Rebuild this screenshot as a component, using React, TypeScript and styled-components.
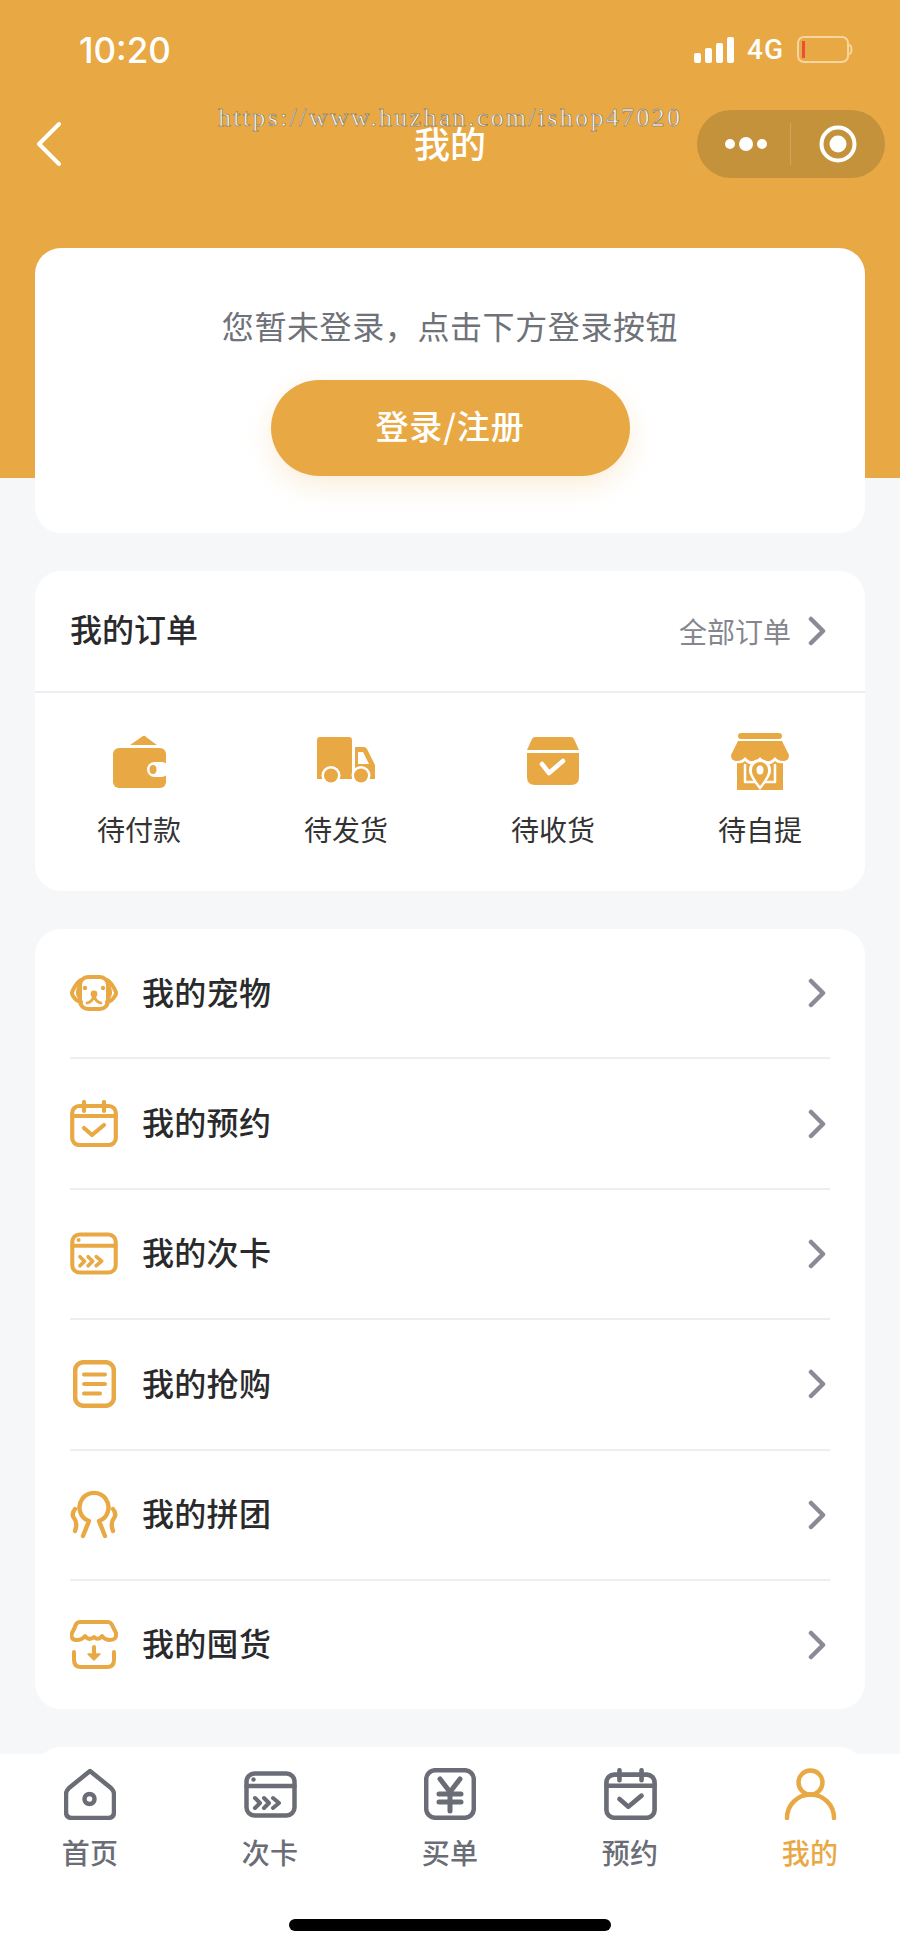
import React from "react";
import styled, { createGlobalStyle } from "styled-components";

const ORANGE = "#e8a945";
const GREY = "#6b6d76";

const Global = createGlobalStyle`
  html, body {
    margin: 0;
    padding: 0;
    background: #f6f7f9;
  }
  * {
    box-sizing: border-box;
  }
`;

const Page = styled.div`
  position: relative;
  width: 900px;
  height: 1948px;
  overflow: hidden;
  display: flex;
  flex-direction: column;
  font-family: "Noto Sans CJK SC", "Noto Sans", sans-serif;
  background: linear-gradient(${ORANGE} 478px, #f6f7f9 478px);
`;

const Watermark = styled.div`
  position: absolute;
  top: 103px;
  left: 218px;
  font-family: "Liberation Serif", serif;
  font-size: 26px;
  line-height: 30px;
  letter-spacing: 2.3px;
  white-space: nowrap;
  color: rgba(255, 255, 255, 0.92);
  -webkit-text-stroke: 0.5px #6a655a;
`;

const StatusBar = styled.div`
  height: 98px;
  padding: 30px 47px 0 79px;
  display: flex;
  justify-content: space-between;
  align-items: flex-start;
  color: #fff;
`;

const Time = styled.div`
  font-family: "Inter", sans-serif;
  font-size: 35px;
  font-weight: 500;
  line-height: 40px;
`;

const StatusIcons = styled.div`
  display: flex;
  align-items: center;
  gap: 13px;
  height: 40px;
`;

const Network = styled.span`
  font-family: "Roboto", sans-serif;
  font-size: 28px;
  font-weight: 500;
  line-height: 30px;
  letter-spacing: 1px;
`;

const NavBar = styled.div`
  height: 92px;
  padding: 0 15px;
  display: grid;
  grid-template-columns: 1fr auto 1fr;
  align-items: center;
  color: #fff;
`;

const BackButton = styled.div`
  padding-left: 22px;
`;

const NavTitle = styled.div`
  font-size: 36px;
  font-weight: 500;
  line-height: 44px;
  padding-bottom: 5px;
`;

const Capsule = styled.div`
  justify-self: end;
  width: 188px;
  height: 68px;
  border-radius: 34px;
  background: #c4923a;
  display: flex;
  align-items: center;
  padding-left: 27px;
`;

const CapsuleLine = styled.div`
  width: 1px;
  height: 42px;
  margin: 0 28px 0 22px;
  background: rgba(255, 255, 255, 0.18);
`;

const Content = styled.div`
  flex: 1;
  min-height: 0;
  overflow: hidden;
  padding: 58px 35px 0;
  display: flex;
  flex-direction: column;
  gap: 38px;
`;

const Card = styled.section`
  flex: none;
  background: #fff;
  border-radius: 26px;
`;

const LoginCard = styled(Card)`
  height: 285px;
  padding-top: 53px;
  display: flex;
  flex-direction: column;
  align-items: center;
`;

const Hint = styled.div`
  font-size: 32px;
  line-height: 48px;
  letter-spacing: 0.6px;
  color: #6f7278;
`;

const LoginButton = styled.button`
  width: 359px;
  height: 96px;
  margin-top: 31px;
  padding: 0 0 6px;
  border: 0;
  border-radius: 48px;
  background: ${ORANGE};
  color: #fff;
  font-family: inherit;
  font-size: 33px;
  font-weight: 500;
  letter-spacing: 0.8px;
  box-shadow: 0 10px 26px rgba(232, 169, 69, 0.2);
`;

const OrderCard = styled(Card)`
  height: 320px;
`;

const OrderHead = styled.div`
  height: 122px;
  padding: 0 38px 0 35px;
  display: flex;
  align-items: center;
  justify-content: space-between;
  border-bottom: 2px solid #eceef2;
`;

const OrderTitle = styled.div`
  font-size: 32px;
  font-weight: 500;
  padding-bottom: 6px;
  color: #2a2a2c;
`;

const AllOrders = styled.div`
  display: flex;
  align-items: center;
  gap: 16px;
  font-size: 28px;
  color: #85868e;
`;

const OrderRow = styled.div`
  display: grid;
  grid-template-columns: repeat(4, 207px);
  justify-content: center;
  margin-left: -1px;
  padding-top: 37px;
`;

const OrderItem = styled.div`
  display: flex;
  flex-direction: column;
  align-items: center;
  font-size: 28px;
  color: #333;
`;

const OrderIcon = styled.div`
  height: 62px;
  display: flex;
  align-items: center;
  justify-content: center;
`;

const OrderLabel = styled.div`
  margin-top: 13px;
  line-height: 48px;
`;

const MenuRow = styled.div`
  height: 130.4px;
  margin: 0 35px;
  padding-right: 3px;
  display: flex;
  align-items: center;
  border-bottom: 2px solid #eceef2;
  &:last-child {
    border-bottom: 0;
    height: 128px;
  }
`;

const MenuIcon = styled.div`
  width: 48px;
  height: 50px;
  display: flex;
  align-items: center;
  justify-content: center;
  flex: none;
`;

const MenuText = styled.div`
  flex: 1;
  margin-left: 24px;
  padding-bottom: 5px;
  font-size: 32px;
  font-weight: 500;
  letter-spacing: 0.3px;
  color: #2a2a2c;
`;

const NextCard = styled(Card)`
  height: 100px;
`;

const TabBar = styled.nav`
  flex: none;
  height: 194px;
  background: #fff;
  display: grid;
  grid-template-columns: repeat(5, 180px);
  padding-top: 14px;
  position: relative;
`;

const Tab = styled.div<{ $active?: boolean }>`
  display: flex;
  flex-direction: column;
  align-items: center;
  font-size: 28px;
  font-weight: 500;
  letter-spacing: 0.3px;
  line-height: 40px;
  color: ${(p) => (p.$active ? ORANGE : GREY)};
`;

const TabIcon = styled.div`
  height: 52px;
  display: flex;
  align-items: center;
  justify-content: center;
  margin-bottom: 12px;
`;

const HomeBar = styled.div`
  position: absolute;
  left: 289px;
  top: 165px;
  width: 322px;
  height: 12px;
  border-radius: 6px;
  background: #000;
`;

const Svg = styled.svg`
  display: block;
  fill: none;
  stroke-linecap: round;
  stroke-linejoin: round;
`;

const Chevron = () => (
  <Svg width="20" height="30" viewBox="0 0 20 30" stroke="#8a8b96" strokeWidth="4.5">
    <path d="M4 3 L16 15 L4 27" />
  </Svg>
);

const CardIcon = ({ color, w, h }: { color: string; w: number; h: number }) => (
  <Svg width={w} height={h} viewBox="0 0 53 47" stroke={color} strokeWidth="4.5">
    <rect x="2.5" y="2.5" width="48" height="42" rx="8" />
    <path d="M2.5 15 H50.5" />
    <circle cx="9.5" cy="8.5" r="2.2" fill={color} stroke="none" />
    <path d="M11 27 L16 32 L11 37 M20 27 L25 32 L20 37 M29 27 L35 32 L29 37" strokeWidth="4" />
  </Svg>
);

const CalendarIcon = ({ color, w, h }: { color: string; w: number; h: number }) => (
  <Svg width={w} height={h} viewBox="0 0 48 47" stroke={color} strokeWidth="4.2">
    <rect x="2.2" y="6" width="43.6" height="39" rx="7" />
    <path d="M2.2 16 H45.8 M14 2 V11 M34 2 V11" />
    <path d="M14 28 L22 35 L34 25" />
  </Svg>
);

const icons: Record<string, React.ReactNode> = {
  pet: (
    <Svg width="48" height="36" viewBox="0 0 48 36" stroke={ORANGE} strokeWidth="4">
      <rect x="10" y="2" width="28" height="32" rx="8" />
      <path d="M11 5 Q7 7 3 15 Q1 18 3 21 Q6 26 11 27 M37 5 Q41 7 45 15 Q47 18 45 21 Q42 26 37 27" />
      <path d="M10 6 L7 12 Q5 18 7 22 L10 26 Z M38 6 L41 12 Q43 18 41 22 L38 26 Z" fill={ORANGE} stroke="none" />
      <circle cx="15" cy="13" r="2.2" fill={ORANGE} stroke="none" />
      <circle cx="33" cy="13" r="2.2" fill={ORANGE} stroke="none" />
      <circle cx="24" cy="19" r="3.4" fill={ORANGE} stroke="none" />
      <path d="M17 28 Q22 27 24 21 Q26 27 31 28" strokeWidth="2.8" />
    </Svg>
  ),
  calendar: <CalendarIcon color={ORANGE} w={48} h={47} />,
  card: <CardIcon color={ORANGE} w={48} h={43} />,
  doc: (
    <Svg width="43" height="48" viewBox="0 0 43 48" stroke={ORANGE} strokeWidth="4.5">
      <rect x="2.2" y="2.2" width="38.6" height="43.6" rx="8" />
      <path d="M11 14.5 H32 M11 24 H32 M11 33.5 H27" strokeWidth="4" />
    </Svg>
  ),
  octopus: (
    <Svg width="48" height="49" viewBox="0 0 48 49" stroke={ORANGE} strokeWidth="4.4">
      <path d="M13 46 L19 31 A14.5 14.5 0 1 1 29 31 L35 46" />
      <path d="M5 19 Q1 24 4 28 Q8 33 5 41" />
      <path d="M43 19 Q47 24 44 28 Q40 33 43 41" />
    </Svg>
  ),
  store: (
    <Svg width="48" height="49" viewBox="0 0 48 49" stroke={ORANGE} strokeWidth="4">
      <path d="M10 2 H38 Q41 2 43 7 L46 13 Q47 20 40 20 Q35 20 32 16 Q28 21 24 17 Q19 21 15 16 Q12 20 7 20 Q0 20 2 13 L5 7 Q6 2 10 2 Z" />
      <path d="M4 32 V40 Q4 47 11 47 H37 Q44 47 44 40 V32" />
      <path d="M24 27 V36" />
      <path d="M18 34 L24 40 L30 34 Z" fill={ORANGE} strokeWidth="1.5" />
    </Svg>
  ),
};

const orderIcons: React.ReactNode[] = [
  <Svg key="wallet" width="53" height="53" viewBox="0 0 53 53">
    <path d="M17 10 L30 1 Q32 0 33 2 L44 10 Z" fill={ORANGE} />
    <rect x="0" y="13" width="53" height="40" rx="6" fill={ORANGE} />
    <rect x="34" y="27" width="22" height="15" rx="7.5" fill="#fff" />
    <ellipse cx="40" cy="34.5" rx="3.5" ry="4.5" fill={ORANGE} />
  </Svg>,
  <Svg key="truck" width="58" height="48" viewBox="0 0 58 48">
    <path d="M3 0 H32 Q35 0 35 3 V42 H0 V3 Q0 0 3 0 Z" fill={ORANGE} />
    <path d="M38 10 H47 Q49 10 50 12 L58 28 V42 H38 Z" fill={ORANGE} />
    <path d="M41 15 H46 L52 27 H41 Z" fill="#fff" />
    <circle cx="14" cy="38.5" r="9.5" fill="#fff" />
    <circle cx="44" cy="38.5" r="9.5" fill="#fff" />
    <circle cx="14" cy="38.5" r="7" fill={ORANGE} />
    <circle cx="44" cy="38.5" r="7" fill={ORANGE} />
  </Svg>,
  <Svg key="box" width="52" height="48" viewBox="0 0 52 48">
    <path d="M8 0 H44 Q46 0 47 2 L52 13 H0 L5 2 Q6 0 8 0 Z" fill={ORANGE} />
    <path d="M0 16 H52 V40 Q52 48 44 48 H8 Q0 48 0 40 Z" fill={ORANGE} />
    <path d="M15 27 L22 36 L36 24" stroke="#fff" strokeWidth="4.5" />
  </Svg>,
  <Svg key="shop" width="58" height="57" viewBox="0 0 58 57">
    <rect x="7" y="0" width="44" height="6" rx="3" fill={ORANGE} />
    <path d="M7 8 H51 L58 22 Q58 28 52 28 Q47 28 44 24 Q40 29 36 28 Q32 28 29 24 Q26 28 22 28 Q18 29 14 24 Q11 28 6 28 Q0 28 0 22 Z" fill={ORANGE} />
    <path d="M6 30 Q11 31 14 28 Q18 32 22 31 Q26 31 29 28 Q32 31 36 31 Q40 32 44 28 Q47 31 52 30 V57 H6 Z" fill={ORANGE} />
    <path d="M14 32 V49 H44 V32" stroke="#fff" strokeWidth="2.5" fill="none" />
    <path d="M29 57 Q17 42 18 37 A11 11 0 0 1 40 37 Q41 42 29 57 Z" fill="#fff" />
    <path d="M29 53 Q20 42 21 37 A8 8 0 0 1 37 37 Q38 42 29 53 Z" fill={ORANGE} />
    <ellipse cx="29" cy="37" rx="3.5" ry="4.5" fill="#fff" />
  </Svg>,
];

const orders = ["待付款", "待发货", "待收货", "待自提"];

const menu = [
  { key: "pet", label: "我的宠物" },
  { key: "calendar", label: "我的预约" },
  { key: "card", label: "我的次卡" },
  { key: "doc", label: "我的抢购" },
  { key: "octopus", label: "我的拼团" },
  { key: "store", label: "我的囤货" },
];

export default function App() {
  return (
    <Page>
      <Global />
      <StatusBar>
        <Time>10:20</Time>
        <StatusIcons>
          <Svg width="40" height="26" viewBox="0 0 40 26">
            <rect x="0" y="16" width="7" height="10" rx="2" fill="#fff" />
            <rect x="11" y="11" width="7" height="15" rx="2" fill="#fff" />
            <rect x="22" y="6" width="7" height="20" rx="2" fill="#fff" />
            <rect x="33" y="0" width="7" height="26" rx="2" fill="#fff" />
          </Svg>
          <Network>4G</Network>
          <Svg width="56" height="28" viewBox="0 0 56 28">
            <rect x="1" y="1" width="50" height="25" rx="6" stroke="#f7d59e" strokeWidth="2" />
            <rect x="5" y="5" width="3" height="17" fill="#e8503a" />
            <path d="M53 9 Q56 13.5 53 18" stroke="#f7d59e" strokeWidth="2" />
          </Svg>
        </StatusIcons>
      </StatusBar>
      <NavBar>
        <BackButton>
          <Svg width="24" height="44" viewBox="0 0 24 44" stroke="#fff" strokeWidth="4">
            <path d="M22 2 L2 22 L22 42" />
          </Svg>
        </BackButton>
        <NavTitle>我的</NavTitle>
        <Capsule>
          <Svg width="44" height="20" viewBox="0 0 44 20">
            <circle cx="6" cy="10" r="5" fill="#fff" />
            <circle cx="22" cy="10" r="7" fill="#fff" />
            <circle cx="38" cy="10" r="5" fill="#fff" />
          </Svg>
          <CapsuleLine />
          <Svg width="38" height="38" viewBox="0 0 38 38" stroke="#fff" strokeWidth="4">
            <circle cx="19" cy="19" r="16.5" />
            <circle cx="19" cy="19" r="8.5" fill="#fff" stroke="none" />
          </Svg>
        </Capsule>
      </NavBar>
      <Watermark>https://www.huzhan.com/ishop47020</Watermark>
      <Content>
        <LoginCard>
          <Hint>您暂未登录，点击下方登录按钮</Hint>
          <LoginButton>登录/注册</LoginButton>
        </LoginCard>
        <OrderCard>
          <OrderHead>
            <OrderTitle>我的订单</OrderTitle>
            <AllOrders>
              全部订单
              <Chevron />
            </AllOrders>
          </OrderHead>
          <OrderRow>
            {orders.map((label, i) => (
              <OrderItem key={label}>
                <OrderIcon>{orderIcons[i]}</OrderIcon>
                <OrderLabel>{label}</OrderLabel>
              </OrderItem>
            ))}
          </OrderRow>
        </OrderCard>
        <Card>
          {menu.map((m) => (
            <MenuRow key={m.key}>
              <MenuIcon>{icons[m.key]}</MenuIcon>
              <MenuText>{m.label}</MenuText>
              <Chevron />
            </MenuRow>
          ))}
        </Card>
        <NextCard />
      </Content>
      <TabBar>
        <Tab>
          <TabIcon>
            <Svg width="52" height="52" viewBox="0 0 52 52" stroke={GREY} strokeWidth="4.5">
              <path d="M26 3 L47 20 Q50 23 50 26 V44 Q50 50 44 50 H8 Q2 50 2 44 V26 Q2 23 5 20 Z" />
              <circle cx="25.5" cy="31" r="5" />
            </Svg>
          </TabIcon>
          首页
        </Tab>
        <Tab>
          <TabIcon>
            <CardIcon color={GREY} w={53} h={47} />
          </TabIcon>
          次卡
        </Tab>
        <Tab>
          <TabIcon>
            <Svg width="52" height="52" viewBox="0 0 52 52" stroke={GREY} strokeWidth="4.5">
              <rect x="2.2" y="2.2" width="47.6" height="47.6" rx="9" />
              <path d="M16 11 L26 24 L36 11 M15 26 H37 M15 34 H37 M26 24 V43" strokeWidth="5" />
            </Svg>
          </TabIcon>
          买单
        </Tab>
        <Tab>
          <TabIcon>
            <CalendarIcon color={GREY} w={53} h={52} />
          </TabIcon>
          预约
        </Tab>
        <Tab $active>
          <TabIcon>
            <Svg width="53" height="52" viewBox="0 0 53 52" stroke={ORANGE} strokeWidth="4.5">
              <circle cx="26.5" cy="14.5" r="12" />
              <path d="M3 50 A23.5 23.5 0 0 1 50 50" />
            </Svg>
          </TabIcon>
          我的
        </Tab>
        <HomeBar />
      </TabBar>
    </Page>
  );
}
